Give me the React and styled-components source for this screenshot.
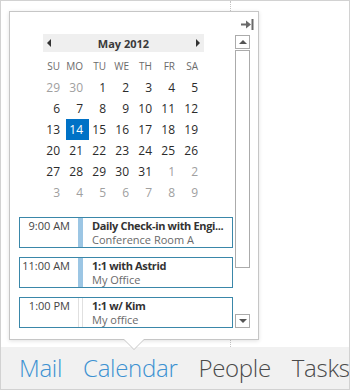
import React from "react";
import styled, { createGlobalStyle } from "styled-components";

const GlobalStyle = createGlobalStyle`
  html, body {
    margin: 0;
    padding: 0;
    background: #ffffff;
  }
  body {
    font-family: "Open Sans", "Noto Sans", "Liberation Sans", sans-serif;
    color: #333;
  }
  * {
    box-sizing: border-box;
  }
`;

// Outer frame of the window
const Frame = styled.div`
  width: 350px;
  height: 390px;
  border: 1px solid #d2d2d2;
  display: flex;
  flex-direction: column;
  overflow: hidden;
`;

const Main = styled.div`
  position: relative;
  flex: 1;
  display: flex;
`;

// dotted column divider of the calendar view behind the peek
const BackColumn = styled.div`
  width: 230px;
  border-right: 1px dotted #c4c4c4;
`;

const Peek = styled.div`
  position: absolute;
  left: 8px;
  top: 10px;
  width: 250px;
  height: 329px;
  background: #fff;
  border: 1px solid #c6c6c6;
  box-shadow: 0 1px 4px rgba(0, 0, 0, 0.12);
  padding: 0 8px 11px 9px;
  display: flex;
  flex-direction: column;

  &::before,
  &::after {
    content: "";
    position: absolute;
    left: 50%;
    width: 0;
    height: 0;
    border-style: solid;
  }
  &::before {
    bottom: -11px;
    margin-left: -11px;
    border-width: 11px 11px 0 11px;
    border-color: #c6c6c6 transparent transparent transparent;
  }
  &::after {
    bottom: -10px;
    margin-left: -10px;
    border-width: 10px 10px 0 10px;
    border-color: #fff transparent transparent transparent;
  }
`;

const PeekHeader = styled.div`
  height: 22px;
  display: flex;
  justify-content: flex-end;
  align-items: center;
  padding: 2px 0 0;
`;

const PinButton = styled.span`
  display: flex;
  width: 14px;
  height: 12px;
  align-items: center;
  justify-content: center;
  margin-right: -4px;
`;

const PeekBody = styled.div`
  flex: 1;
  display: flex;
  gap: 2px;
`;

const Content = styled.div`
  flex: 1;
  display: flex;
  flex-direction: column;
`;

/* ---------- month calendar ---------- */

const Month = styled.div`
  width: 161px;
  margin-left: 24px;
`;

const MonthHeader = styled.div`
  height: 18px;
  background: #efefef;
  display: flex;
  align-items: center;
  justify-content: space-between;
  padding: 0 4px;
`;

const MonthTitle = styled.span`
  font-size: 11px;
  font-weight: 700;
  color: #3a3a3a;
`;

const Arrow = styled.span`
  width: 0;
  height: 0;
  border-top: 4px solid transparent;
  border-bottom: 4px solid transparent;
  ${(p) =>
    p.$dir === "left"
      ? "border-right: 4px solid #333;"
      : "border-left: 4px solid #333;"}
`;

const DayGrid = styled.div`
  margin-top: 4px;
  display: grid;
  grid-template-columns: repeat(7, 23px);
  grid-auto-rows: 21px;
`;

const WeekDay = styled.div`
  font-size: 10px;
  color: #6b6b6b;
  text-align: right;
  padding-right: 6px;
  line-height: 21px;
`;

const Day = styled.div`
  font-size: 12px;
  line-height: 21px;
  text-align: right;
  padding-right: 6px;
  color: ${(p) => (p.$selected ? "#fff" : p.$muted ? "#a0a0a0" : "#2b2b2b")};
  background: ${(p) => (p.$selected ? "#0072c6" : "transparent")};
`;

/* ---------- agenda ---------- */

const Agenda = styled.div`
  margin-top: 14px;
  display: flex;
  flex-direction: column;
  gap: 9px;
`;

const Appointment = styled.div`
  height: 31px;
  border: 1px solid #3a87a9;
  display: flex;
  font-size: 11px;
`;

const Time = styled.div`
  width: 58px;
  flex: none;
  text-align: right;
  padding-right: 8px;
  line-height: 15px;
  color: #444;
  white-space: nowrap;
`;

const StatusBar = styled.div`
  width: 5px;
  flex: none;
  background: ${(p) => (p.$free ? "#fff" : "#9cc6e4")};
  border-left: 1px solid ${(p) => (p.$free ? "#e0e0e0" : "#9cc6e4")};
  border-right: 1px solid ${(p) => (p.$free ? "#e0e0e0" : "#9cc6e4")};
`;

const Details = styled.div`
  flex: 1;
  min-width: 0;
  padding-left: 9px;
`;

const Subject = styled.div`
  font-weight: 700;
  line-height: 15px;
  color: #333;
  white-space: nowrap;
  letter-spacing: -0.35px;
`;

const Location = styled.div`
  line-height: 14px;
  color: #6a6a6a;
  white-space: nowrap;
`;

/* ---------- scrollbar ---------- */

const Scrollbar = styled.div`
  width: 15px;
  margin-top: 1px;
  display: flex;
  flex-direction: column;
`;

const ScrollButton = styled.div`
  height: 14px;
  border: 1px solid #ababab;
  background: #fff;
  display: flex;
  align-items: center;
  justify-content: center;
`;

const ScrollArrow = styled.span`
  width: 0;
  height: 0;
  border-left: 4px solid transparent;
  border-right: 4px solid transparent;
  ${(p) =>
    p.$dir === "up"
      ? "border-bottom: 4px solid #555;"
      : "border-top: 4px solid #555;"}
`;

const ScrollTrack = styled.div`
  flex: 1;
  display: flex;
  flex-direction: column;
  padding-top: 1px;
`;

const ScrollThumb = styled.div`
  height: 218px;
  border: 1px solid #ababab;
  background: #fff;
`;

/* ---------- navigation ---------- */

const NavBar = styled.nav`
  height: 42px;
  flex: none;
  background: #f1f1f1;
  display: flex;
  align-items: center;
  padding-left: 18px;
  gap: 21px;
  white-space: nowrap;
`;

const NavItem = styled.span`
  font-size: 24px;
  font-weight: 300;
  line-height: 32px;
  letter-spacing: -0.3px;
  color: ${(p) => (p.$active ? "#3d92d2" : "#4a4a4a")};
`;

const PinIcon = () => (
  <svg width="13" height="11" viewBox="0 0 13 11">
    <rect x="0" y="4.5" width="6" height="2" fill="#6a6a6a" />
    <polygon points="5,1.5 10,5.5 5,9.5" fill="#6a6a6a" />
    <rect x="10.5" y="0" width="2" height="11" fill="#6a6a6a" />
  </svg>
);

const weekDays = ["SU", "MO", "TU", "WE", "TH", "FR", "SA"];

const buildDays = () => {
  const days = [];
  [29, 30].forEach((d) => days.push({ d, muted: true }));
  for (let d = 1; d <= 31; d++) days.push({ d, selected: d === 14 });
  for (let d = 1; days.length < 42; d++) days.push({ d, muted: true });
  return days;
};

const appointments = [
  { time: "9:00 AM", subject: "Daily Check-in with Engi...", location: "Conference Room A" },
  { time: "11:00 AM", subject: "1:1 with Astrid", location: "My Office" },
  { time: "1:00 PM", subject: "1:1 w/ Kim", location: "My office", free: true },
];

const App = () => {
  const days = buildDays();

  return (
    <>
      <GlobalStyle />
      <Frame>
        <Main>
          <BackColumn />
          <Peek>
            <PeekHeader>
              <PinButton>
                <PinIcon />
              </PinButton>
            </PeekHeader>
            <PeekBody>
              <Content>
                <Month>
                  <MonthHeader>
                    <Arrow $dir="left" />
                    <MonthTitle>May 2012</MonthTitle>
                    <Arrow $dir="right" />
                  </MonthHeader>
                  <DayGrid>
                    {weekDays.map((w) => (
                      <WeekDay key={w}>{w}</WeekDay>
                    ))}
                    {days.map((day, i) => (
                      <Day key={i} $muted={day.muted} $selected={day.selected}>
                        {day.d}
                      </Day>
                    ))}
                  </DayGrid>
                </Month>
                <Agenda>
                  {appointments.map((a) => (
                    <Appointment key={a.time}>
                      <Time>{a.time}</Time>
                      <StatusBar $free={a.free} />
                      <Details>
                        <Subject>{a.subject}</Subject>
                        <Location>{a.location}</Location>
                      </Details>
                    </Appointment>
                  ))}
                </Agenda>
              </Content>
              <Scrollbar>
                <ScrollButton>
                  <ScrollArrow $dir="up" />
                </ScrollButton>
                <ScrollTrack>
                  <ScrollThumb />
                </ScrollTrack>
                <ScrollButton>
                  <ScrollArrow $dir="down" />
                </ScrollButton>
              </Scrollbar>
            </PeekBody>
          </Peek>
        </Main>
        <NavBar>
          <NavItem $active>Mail</NavItem>
          <NavItem $active>Calendar</NavItem>
          <NavItem>People</NavItem>
          <NavItem>Tasks</NavItem>
        </NavBar>
      </Frame>
    </>
  );
};

export default App;
